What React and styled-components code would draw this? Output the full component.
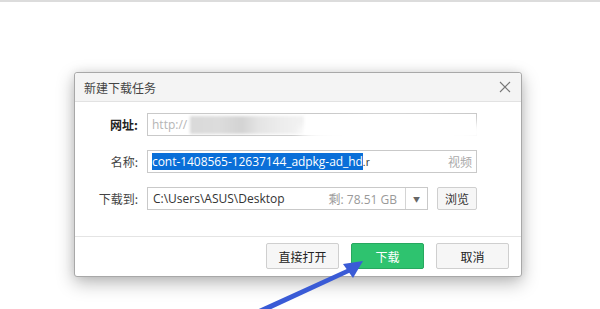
import React from "react";
import styled, { createGlobalStyle } from "styled-components";

const Global = createGlobalStyle`
  html, body { margin: 0; padding: 0; background: #fff; }
  body { font-family: "Noto Sans CJK SC", "Noto Sans", sans-serif; }
  #root { width: 600px; height: 309px; overflow: hidden; }
`;

const Page = styled.div`
  position: relative;
  width: 600px;
  height: 309px;
  box-sizing: border-box;
  border-top: 2px solid #dcdcdc;
  padding: 70px 0 0 74px;
  background: #fff;
  overflow: hidden;
`;

const Dialog = styled.div`
  width: 448px;
  height: 205px;
  box-sizing: border-box;
  border: 1px solid #a8a8a8;
  border-radius: 3px;
  background: #fff;
  box-shadow: 0 6px 18px rgba(0, 0, 0, 0.28), 0 0 10px rgba(0, 0, 0, 0.08);
  display: flex;
  flex-direction: column;
`;

const TitleBar = styled.div`
  height: 28px;
  flex: none;
  background: #f4f4f4;
  border-bottom: 1px solid #e2e2e2;
  border-radius: 3px 3px 0 0;
  display: flex;
  align-items: center;
  justify-content: space-between;
  padding: 0 10px 0 9px;
  font-size: 12px;
  color: #444;
`;

const Close = styled.svg`
  width: 12px;
  height: 12px;
`;

const Body = styled.div`
  padding: 11px 0 0 0;
  display: flex;
  flex-direction: column;
  gap: 14px;
  height: 135px;
  box-sizing: border-box;
  border-bottom: 1px solid #e4e4e4;
`;

const Row = styled.div`
  display: grid;
  grid-template-columns: 63px 330px;
  column-gap: 9px;
  align-items: center;
`;

const Label = styled.div`
  text-align: right;
  font-size: 12px;
  color: ${(p) => (p.bold ? "#222" : "#444")};
  font-weight: ${(p) => (p.bold ? 700 : 400)};
`;

const Field = styled.div`
  position: relative;
  height: 23px;
  box-sizing: border-box;
  border: 1px solid #c9c9c9;
  background: #fff;
  display: flex;
  align-items: center;
  padding: 0 4px;
  font-size: 12px;
  color: #333;
  overflow: ${(p) => (p.open ? "visible" : "hidden")};
`;

const Hint = styled.span`
  color: #b5b5b5;
  font-family: "Open Sans", "Noto Sans CJK SC", sans-serif;
`;

const Blur = styled.span`
  display: inline-block;
  width: 114px;
  height: 18px;
  margin-left: 3px;
  background: linear-gradient(90deg, #d9d9d9 0%, #dcdcdc 25%, #d3d3d3 45%, #e4e4e4 60%, #ededed 80%, #f2f2f2 100%);
  filter: blur(1.5px);
`;

const Smudge = styled.span`
  position: absolute;
  left: 150px;
  top: 3px;
  width: 200px;
  height: 30px;
  border-radius: 50%;
  background: #fff;
  filter: blur(4px);
`;

const Selected = styled.span`
  background: #0a6fd8;
  color: #fff;
  font-family: "Open Sans", "Noto Sans CJK SC", sans-serif;
  line-height: 17px;
  letter-spacing: -0.05px;
`;

const Tail = styled.span`
  color: #333;
  font-size: 10px;
`;

const Right = styled.span`
  margin-left: auto;
  color: #aaa;
  font-size: 12px;
`;

const PathRow = styled.div`
  display: flex;
  gap: 9px;
  align-items: center;
`;

const Select = styled.div`
  width: 281px;
  height: 23px;
  box-sizing: border-box;
  border: 1px solid #c9c9c9;
  display: flex;
  align-items: stretch;
  font-size: 12px;
`;

const SelectText = styled.div`
  flex: 1;
  display: flex;
  align-items: center;
  padding: 0 8px 0 5px;
  color: #333;
  font-family: "Open Sans", "Noto Sans CJK SC", sans-serif;
`;

const Free = styled.span`
  margin-left: auto;
  color: #999;
`;

const Caret = styled.div`
  width: 21px;
  border-left: 1px solid #d4d4d4;
  display: flex;
  align-items: center;
  justify-content: center;
  color: #666;
  font-size: 7px;
`;

const SmallBtn = styled.div`
  width: 40px;
  height: 23px;
  box-sizing: border-box;
  border: 1px solid #cfcfcf;
  border-radius: 2px;
  background: #f6f6f6;
  display: flex;
  align-items: center;
  justify-content: center;
  font-size: 12px;
  color: #333;
`;

const Footer = styled.div`
  flex: 1;
  display: flex;
  justify-content: flex-end;
  align-items: flex-start;
  gap: 12px;
  padding: 6px 12px 0 0;
`;

const Button = styled.div`
  width: 73px;
  height: 26px;
  box-sizing: border-box;
  border-radius: 2px;
  border: 1px solid ${(p) => (p.primary ? "#27a85f" : "#cfcfcf")};
  background: ${(p) => (p.primary ? "#2ec36f" : "#f6f6f6")};
  color: ${(p) => (p.primary ? "#fff" : "#222")};
  display: flex;
  align-items: center;
  justify-content: center;
  font-size: 12px;
`;

const Arrow = styled.svg`
  position: absolute;
  left: 0;
  top: 0;
  width: 600px;
  height: 309px;
  pointer-events: none;
`;

export default function App() {
  return (
    <>
      <Global />
      <Page>
        <Dialog>
          <TitleBar>
            <span>新建下载任务</span>
            <Close viewBox="0 0 12 12">
              <path d="M1 1 L11 11 M11 1 L1 11" stroke="#777" strokeWidth="1.1" fill="none" />
            </Close>
          </TitleBar>
          <Body>
            <Row>
              <Label bold>网址:</Label>
              <Field open>
                <Hint>http://</Hint>
                <Blur />
                <Smudge />
              </Field>
            </Row>
            <Row>
              <Label>名称:</Label>
              <Field>
                <Selected>cont-1408565-12637144_adpkg-ad_hd</Selected>
                <Tail>.r</Tail>
                <Right>视频</Right>
              </Field>
            </Row>
            <Row>
              <Label>下载到:</Label>
              <PathRow>
                <Select>
                  <SelectText>
                    C:\Users\ASUS\Desktop
                    <Free>剩: 78.51 GB</Free>
                  </SelectText>
                  <Caret>▼</Caret>
                </Select>
                <SmallBtn>浏览</SmallBtn>
              </PathRow>
            </Row>
          </Body>
          <Footer>
            <Button>直接打开</Button>
            <Button primary>下载</Button>
            <Button>取消</Button>
          </Footer>
        </Dialog>
        <Arrow viewBox="0 0 600 309">
          <path d="M250 311 L349 266 L351 270 L254 315 Z" fill="#3a5bd6" />
          <path d="M363 259 L343 262 L353 276 Z" fill="#3a5bd6" />
        </Arrow>
      </Page>
    </>
  );
}
